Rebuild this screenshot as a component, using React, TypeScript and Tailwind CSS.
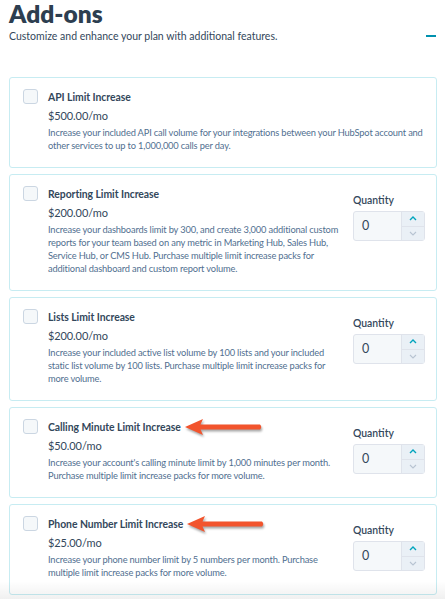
import React from "react";

type Addon = {
  title: string;
  price: string;
  desc: string;
  quantity?: boolean;
};

const addons: Addon[] = [
  {
    title: "API Limit Increase",
    price: "$500.00/mo",
    desc: "Increase your included API call volume for your integrations between your HubSpot account and other services to up to 1,000,000 calls per day.",
  },
  {
    title: "Reporting Limit Increase",
    price: "$200.00/mo",
    desc: "Increase your dashboards limit by 300, and create 3,000 additional custom reports for your team based on any metric in Marketing Hub, Sales Hub, Service Hub, or CMS Hub. Purchase multiple limit increase packs for additional dashboard and custom report volume.",
    quantity: true,
  },
  {
    title: "Lists Limit Increase",
    price: "$200.00/mo",
    desc: "Increase your included active list volume by 100 lists and your included static list volume by 100 lists. Purchase multiple limit increase packs for more volume.",
    quantity: true,
  },
  {
    title: "Calling Minute Limit Increase",
    price: "$50.00/mo",
    desc: "Increase your account's calling minute limit by 1,000 minutes per month. Purchase multiple limit increase packs for more volume.",
    quantity: true,
  },
  {
    title: "Phone Number Limit Increase",
    price: "$25.00/mo",
    desc: "Increase your phone number limit by 5 numbers per month. Purchase multiple limit increase packs for more volume.",
    quantity: true,
  },
];

function Arrow() {
  return (
    <svg width="80" height="18" viewBox="0 0 80 18" className="drop-shadow-[1px_2px_1px_rgba(0,0,0,0.35)]">
      <path d="M1 9 L19 1 L16.5 6.6 L76 6.6 Q78.5 9 76 11.4 L16.5 11.4 L19 17 Z" fill="#f2542d" />
    </svg>
  );
}

function QuantityInput() {
  return (
    <div className="flex flex-col">
      <span className="text-[10.4px] leading-[14px] font-semibold text-[#33475b]">Quantity</span>
      <div className="mt-[4px] flex h-[30px] w-[72px] rounded-[3px] border border-[#dfe3eb] bg-[#f5f8fa]">
        <div className="flex flex-1 items-center pl-[8px] text-[12.5px] text-[#33475b]">0</div>
        <div className="flex w-[23px] flex-col border-l border-[#dfe3eb] bg-[#eaf0f6]">
          <div className="flex flex-1 items-center justify-center border-b border-[#dfe3eb]">
            <svg width="8" height="5" viewBox="0 0 8 5">
              <path d="M1 4 L4 1 L7 4" stroke="#00a4bd" strokeWidth="1.4" fill="none" />
            </svg>
          </div>
          <div className="flex flex-1 items-center justify-center">
            <svg width="8" height="5" viewBox="0 0 8 5">
              <path d="M1 1 L4 4 L7 1" stroke="#b8c4d2" strokeWidth="1.1" fill="none" />
            </svg>
          </div>
        </div>
      </div>
    </div>
  );
}

function AddonCard({ addon, arrow }: { addon: Addon; arrow?: boolean }) {
  return (
    <div className="flex rounded-[3px] border border-[#c7ecf2] bg-white pl-[13px] pr-[11px] pt-[11px] pb-[15px]">
      <div className="h-[15px] w-[15px] shrink-0 rounded-[3px] border border-[#cbd6e2] bg-[#f5f8fa]" />
      <div className="ml-[10px] flex-1">
        <div className="flex">
          <div className="relative text-[10.4px] leading-[16px] font-bold tracking-[-0.05px] text-[#33475b]">
            {addon.title}
            {arrow && (
              <div className="absolute left-full top-1/2 ml-[3px] -translate-y-1/2">
                <Arrow />
              </div>
            )}
          </div>
        </div>
        <div className="mt-[2px] text-[11px] leading-[18px] tracking-[-0.1px] text-[#33475b]">{addon.price}</div>
        <p className="mt-[1px] text-[9.3px] leading-[13px] tracking-[-0.16px] text-[#516f90]">{addon.desc}</p>
      </div>
      {addon.quantity && (
        <div className="ml-[11px] mt-[7px] shrink-0">
          <QuantityInput />
        </div>
      )}
    </div>
  );
}

export default function App() {
  return (
    <div className="relative h-[599px] w-[445px] overflow-hidden bg-white font-['Lato',sans-serif]">
      <div className="pl-[9px] pr-[8px]">
        <h1 className="text-[24.5px] leading-[28px] font-extrabold text-[#2d3e50]">Add-ons</h1>
        <div className="mt-[1px] flex items-center justify-between">
          <p className="text-[10.5px] leading-[14px] text-[#33475b]">
            Customize and enhance your plan with additional features.
          </p>
          <div className="mr-[1px] h-[2px] w-[10px] bg-[#0091ae]" />
        </div>
        <div className="mt-[34px] flex w-[428px] flex-col gap-[6px]">
          {addons.map((a, i) => (
            <AddonCard key={a.title} addon={a} arrow={i >= 3} />
          ))}
        </div>
      </div>
      <div className="pointer-events-none absolute bottom-0 left-0 h-[18px] w-full bg-gradient-to-b from-transparent to-[rgba(0,0,0,0.06)]" />
    </div>
  );
}
